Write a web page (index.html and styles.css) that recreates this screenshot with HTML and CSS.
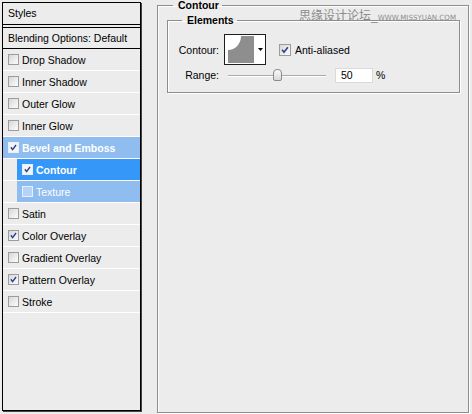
FILE: index.html
```html
<!DOCTYPE html>
<html>
<head>
<meta charset="utf-8">
<link rel="stylesheet" href="styles.css">
</head>
<body>
<div class="app">
  <div class="styles-panel">
    <div class="hdr">Styles</div>
    <div class="blend">Blending Options: Default</div>
    <ul class="list">
      <li class="row"><span class="item"><span class="cb"></span>Drop Shadow</span></li>
      <li class="row"><span class="item"><span class="cb"></span>Inner Shadow</span></li>
      <li class="row"><span class="item"><span class="cb"></span>Outer Glow</span></li>
      <li class="row"><span class="item"><span class="cb"></span>Inner Glow</span></li>
      <li class="row"><span class="item parent"><span class="cb on white"><svg viewBox="0 0 11 11"><path d="M2.3 5.2 L4.4 8 L8.6 2.4"/></svg></span>Bevel and Emboss</span></li>
      <li class="row sub"><span class="item active"><span class="cb on white"><svg viewBox="0 0 11 11"><path d="M2.3 5.2 L4.4 8 L8.6 2.4"/></svg></span>Contour</span></li>
      <li class="row sub"><span class="item child"><span class="cb pale"></span>Texture</span></li>
      <li class="row"><span class="item"><span class="cb"></span>Satin</span></li>
      <li class="row"><span class="item"><span class="cb on"><svg viewBox="0 0 11 11"><path d="M2.3 5.2 L4.4 8 L8.6 2.4"/></svg></span>Color Overlay</span></li>
      <li class="row"><span class="item"><span class="cb"></span>Gradient Overlay</span></li>
      <li class="row"><span class="item"><span class="cb on"><svg viewBox="0 0 11 11"><path d="M2.3 5.2 L4.4 8 L8.6 2.4"/></svg></span>Pattern Overlay</span></li>
      <li class="row"><span class="item"><span class="cb"></span>Stroke</span></li>
    </ul>
  </div>

  <fieldset class="group outer">
    <legend>Contour</legend>
    <fieldset class="group inner">
      <legend>Elements</legend>
      <div class="field-row first">
        <span class="lbl">Contour:</span>
        <div class="swatch">
          <svg width="42" height="31" viewBox="0 0 42 31">
            <rect x="0.5" y="0.5" width="41" height="30" fill="#ffffff" stroke="#1e1e1e"/>
            <rect x="4" y="2" width="26" height="27" fill="#8e8e8e"/>
            <path d="M4 2 L17 2 A13 14 0 0 1 4 16 Z" fill="#ffffff"/>
            <path d="M34 14 L39 14 L36.5 17 Z" fill="#000000"/>
          </svg>
        </div>
        <label class="check"><span class="cb big on"><svg viewBox="0 0 11 11"><path d="M2.3 5.2 L4.4 8 L8.6 2.4"/></svg></span>Anti-aliased</label>
      </div>
      <div class="field-row second">
        <span class="lbl">Range:</span>
        <div class="slider">
          <div class="track"></div>
          <div class="thumb"></div>
        </div>
        <span class="num">50</span>
        <span class="pct">%</span>
      </div>
    </fieldset>
  </fieldset>

  <div class="watermark">思缘设计论坛<span class="us">_</span><span class="url">WWW.MISSYUAN.COM</span></div>
</div>
</body>
</html>
```

FILE: styles.css
```css
* { box-sizing: border-box; }

html, body {
  margin: 0;
  padding: 0;
  background: #ececec;
}

body {
  font-family: "Liberation Sans", Arial, sans-serif;
  font-size: 10.5px;
  color: #000;
}

.app {
  position: relative;
  width: 472px;
  height: 414px;
  display: flex;
  align-items: flex-start;
}

/* ---------- left styles list ---------- */
.styles-panel {
  margin: 2px 0 0 2px;
  width: 139px;
  height: 409px;
  border: 1px solid #000;
  box-shadow: 1px 1px 0 #444;
  background: #ececec;
  display: flex;
  flex-direction: column;
}

.hdr {
  height: 22px;
  line-height: 21px;
  padding-left: 5px;
  border-bottom: 1px solid #000;
}

.blend {
  margin-top: 2px;
  height: 22px;
  line-height: 20px;
  padding-left: 5px;
  border-top: 1px solid #000;
  border-bottom: 1px solid #000;
}

.list {
  list-style: none;
  margin: 0;
  padding: 0;
}

.row {
  height: 22px;
  border-bottom: 1px solid #ffffff;
  display: flex;
}

.row.sub {
  padding-left: 14px;
}

.item {
  flex: 1;
  display: flex;
  align-items: center;
  padding-left: 5px;
  white-space: nowrap;
}

.item.parent {
  background: #8fbdef;
  color: #fff;
  font-weight: bold;
}

.item.active {
  background: #3597f7;
  color: #fff;
  font-weight: bold;
}

.item.child {
  background: #8fbdef;
  color: #fff;
}

/* checkboxes */
.cb {
  width: 11px;
  height: 11px;
  flex: none;
  margin-right: 3px;
  border: 1px solid #9c9c9c;
  background: linear-gradient(135deg, #d6d6d6 0%, #f2f2f2 70%, #fafafa 100%);
  display: flex;
}

.cb svg {
  width: 9px;
  height: 9px;
}

.cb svg path {
  fill: none;
  stroke: #2c3f88;
  stroke-width: 1.7;
}

.cb.white {
  background: #f4f4f4;
  border-color: #e6eef8;
}

.cb.pale {
  background: #b5d4f5;
  border-color: #e8f1fb;
}

.cb.big {
  width: 12px;
  height: 12px;
  margin-right: 4px;
}

.cb.big svg {
  width: 10px;
  height: 10px;
}

/* ---------- right group boxes ---------- */
.group {
  margin: 0;
  border: 1px solid #8d8d8d;
  box-shadow: 1px 1px 0 #ffffff, inset 1px 1px 0 #ffffff;
}

.group legend {
  font-weight: bold;
  line-height: 11px;
  height: 11px;
}

.outer {
  margin-left: 16px;
  width: 312px;
  height: 413px;
  padding: 4px 8px 0 9px;
}

.outer > legend {
  margin-left: 6px;
  padding: 0 3px 0 5px;
}

.inner {
  width: 293px;
  padding: 8px 0 10px 10px;
}

.inner > legend {
  margin-left: 4px;
  padding: 0 3px 0 5px;
}

.field-row {
  display: flex;
  align-items: center;
}

.field-row.first {
  height: 31px;
}

.field-row.second {
  margin-top: 3px;
  height: 14px;
}

.lbl {
  width: 41px;
  text-align: right;
  margin-right: 5px;
  flex: none;
}

.swatch {
  width: 42px;
  height: 31px;
  flex: none;
  display: flex;
}

.check {
  margin-left: 13px;
  display: flex;
  align-items: center;
}

.slider {
  position: relative;
  margin-left: 4px;
  width: 98px;
  height: 14px;
  flex: none;
}

.track {
  position: absolute;
  left: 0;
  right: 0;
  top: 7px;
  height: 2px;
  border-top: 1px solid #a9a9a9;
  border-bottom: 1px solid #ffffff;
}

.thumb {
  position: absolute;
  left: 45px;
  top: 1px;
  width: 9px;
  height: 12px;
  border: 1px solid #8a8a8a;
  border-radius: 4px 4px 2px 2px;
  background: linear-gradient(#fbfbfb, #d9d9d9);
}

.num {
  margin-left: 9px;
  width: 38px;
  height: 15px;
  line-height: 13px;
  padding-left: 5px;
  background: #fff;
  border: 1px solid #dadada;
  flex: none;
}

.pct {
  margin-left: 3px;
}

/* ---------- watermark ---------- */
.watermark {
  position: absolute;
  left: 299px;
  top: 8px;
  font-family: "Noto Sans CJK SC", sans-serif;
  font-size: 12px;
  line-height: 14px;
  color: #8c8c8c;
  white-space: nowrap;
}

.watermark .us {
  font-family: "Liberation Sans", sans-serif;
}

.watermark .url {
  font-family: "DejaVu Sans", sans-serif;
  font-size: 7.1px;
  letter-spacing: 0;
}
```
